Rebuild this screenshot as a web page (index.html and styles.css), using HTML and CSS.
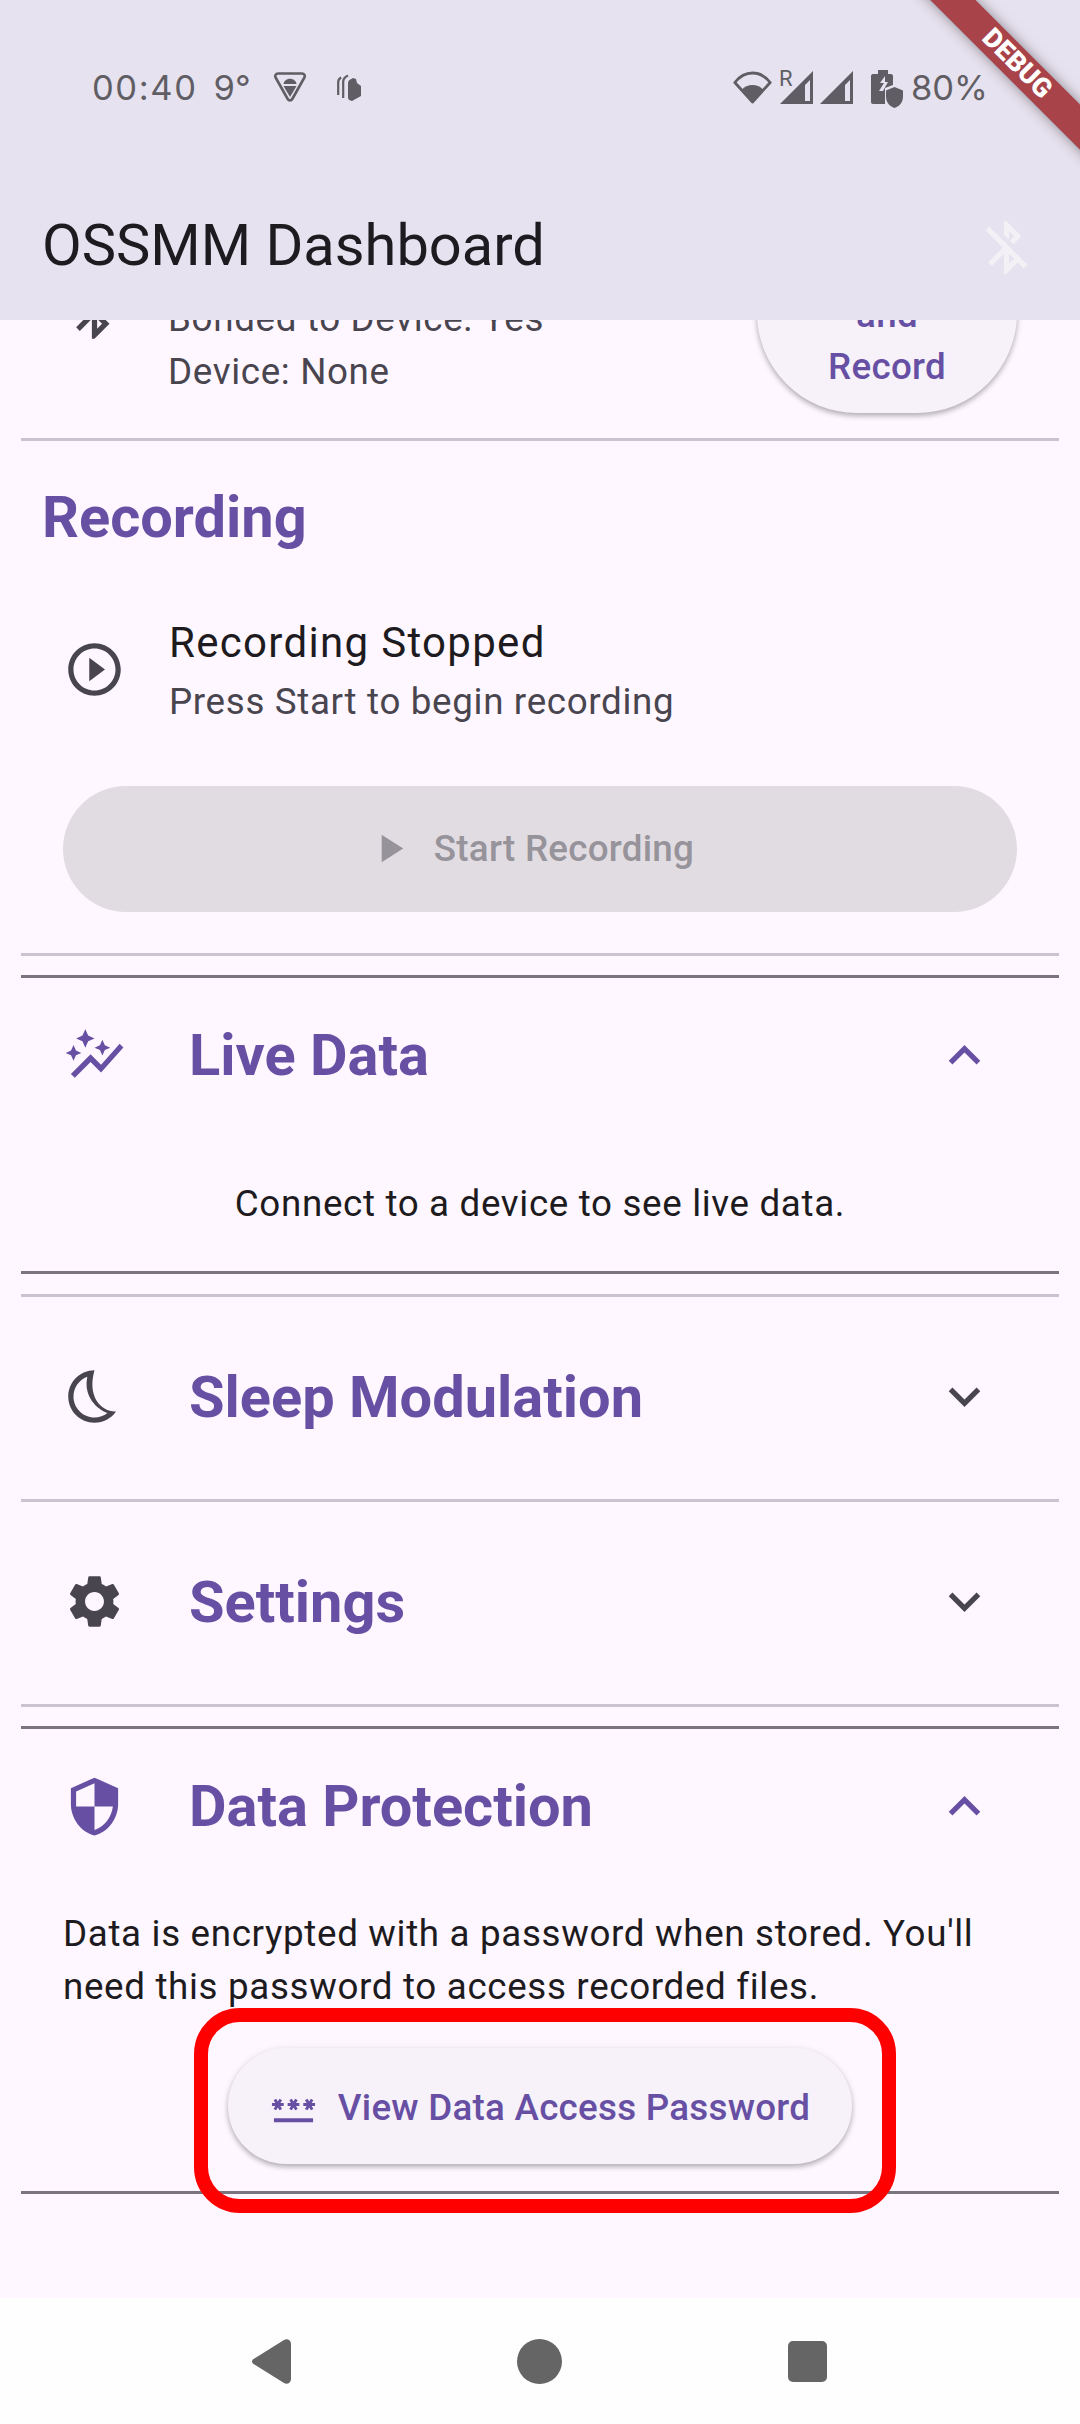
FILE: index.html
```html
<!DOCTYPE html>
<html>

<head>
    <meta name="viewport" content="width=device-width, initial-scale=1.0">
    <title>OSSMM Dashboard</title>
    <link rel="stylesheet" href="styles.css">
</head>

<body>
    <div class="phone">
        <header class="top">
            <div class="status-bar">
                <div class="status-left">
                    <span class="clock">00:40</span>
                    <span class="temp">9°</span>
                    <svg class="ic-vpn" viewBox="0 0 34 32">
                        <path d="M5 2.500h24c2.300 0 3.500 2.200 2.400 4L19.300 28c-1.100 1.900-3.500 1.900-4.600 0L2.600 6.500C1.500 4.700 2.700 2.500 5 2.500z" fill="none" stroke="currentColor" stroke-width="2.600" />
                        <path d="M10.500 13c.4-3.200 3.200-5.300 6.500-5.300s6.100 2.100 6.500 5.300z" fill="currentColor" />
                        <path d="M10.500 15h13L17 26z" fill="currentColor" />
                    </svg>
                    <svg class="ic-cards" viewBox="0 0 24 27">
                        <path d="M1.200 21V8c0-2 1-3.500 3-4.500" fill="none" stroke="currentColor" stroke-width="2.200" />
                        <path d="M6.200 24V8c0-3 1.500-5 4.800-6.500" fill="none" stroke="currentColor" stroke-width="2.200" />
                        <path d="M11 24V9c0-2 1.500-3.500 5-5l3 1 1 4 4 3v10l-9 5-3-1z" fill="currentColor" />
                    </svg>
                </div>
                <div class="status-right">
                    <svg class="ic-wifi" viewBox="0 0 39 33">
                        <path d="M1.800 11.500C6.500 5.500 12.500 2 19.500 2s13 3.500 17.700 9.500L19.500 31z" fill="none" stroke="currentColor" stroke-width="2.800" stroke-linejoin="round" />
                        <path d="M8.500 19c3-3.200 6.700-5 11-5s8 1.800 11 5l-11 13z" fill="currentColor" />
                    </svg>
                    <span class="roam">R</span>
                    <svg class="ic-signal" viewBox="0 0 33 33">
                        <path d="M0 33L33 0v33zM25 30h5V9l-5 5z" fill="currentColor" fill-rule="evenodd" />
                    </svg>
                    <svg class="ic-signal ic-signal-two" viewBox="0 0 33 33">
                        <path d="M0 33L33 0v33zM25 30h5V9l-5 5z" fill="currentColor" fill-rule="evenodd" />
                    </svg>
                    <svg class="ic-battery" viewBox="0 0 32 39">
                        <path d="M0 6c0-1 .7-2 2-2h5V0h10v4h3c1 0 2 1 2 2v9l-8 3v16H2c-1.300 0-2-1-2-2z" fill="currentColor" />
                        <path d="M8 21l5-8H9l5-7v6h3l-5 9z" fill="#e7e2ef" />
                        <path d="M23.500 17l8.500 3.500v6c0 5.500-3.500 10-8.500 11.500-5-1.500-8.500-6-8.500-11.500v-6z" fill="currentColor" />
                    </svg>
                    <span class="battery">80%</span>
                </div>
            </div>
            <div class="app-bar">
                <h1 class="app-title">OSSMM Dashboard</h1>
                <svg class="icon ic-bt-off" viewBox="0 0 24 24">
                    <path d="M13 5.830l1.880 1.880-1.600 1.600 1.410 1.410 3.020-3.020L12 2h-1v5.030l2 2v-3.200zM5.410 4L4 5.410 10.590 12 5 17.590 6.410 19 11 14.410V22h1l4.290-4.290 2.300 2.290L20 18.590 5.410 4zM13 18.170v-3.760l1.880 1.880L13 18.170z" />
                </svg>
            </div>
        </header>

        <main class="content">
            <section class="connection">
                <div class="connection-info">
                    <svg class="icon ic-dark ic-bt" viewBox="0 0 24 24">
                        <path d="M17.710 7.710L12 2h-1v7.590L6.410 5 5 6.410 10.590 12 5 17.590 6.410 19 11 14.410V22h1l5.710-5.710-4.300-4.290 4.300-4.290zM13 5.830l1.880 1.880L13 9.590V5.830zm1.880 10.460L13 18.170v-3.760l1.880 1.880z" />
                    </svg>
                    <div class="sub-text">
                        <div>Bonded to Device: Yes</div>
                        <div>Device: None</div>
                    </div>
                </div>
                <button class="btn-raised btn-connect">Connect and Record</button>
            </section>
            <div class="rule"></div>

            <section class="recording">
                <h2 class="heading recording-heading">Recording</h2>
                <div class="recording-row">
                    <svg class="icon ic-dark" viewBox="0 0 24 24">
                        <path d="M10 16.500l6-4.500-6-4.500v9zM12 2C6.480 2 2 6.480 2 12s4.480 10 10 10 10-4.480 10-10S17.520 2 12 2zm0 18c-4.410 0-8-3.590-8-8s3.590-8 8-8 8 3.590 8 8-3.590 8-8 8z" />
                    </svg>
                    <div>
                        <div class="row-title">Recording Stopped</div>
                        <div class="sub-text">Press Start to begin recording</div>
                    </div>
                </div>
                <button class="btn-start">
                    <svg class="btn-icon" viewBox="0 0 24 24">
                        <path d="M8 5v14l11-7z" />
                    </svg>
                    Start Recording
                </button>
            </section>
            <div class="rule"></div>

            <section class="tile tile-open live">
                <div class="tile-head">
                    <svg class="icon ic-primary" viewBox="0 0 24 24">
                        <path d="M14.060 9.940L12 9l2.060-.94L15 6l.94 2.060L18 9l-2.060.94L15 12l-.94-2.060zM4 14l.94-2.060L7 11l-2.060-.94L4 8l-.94 2.060L1 11l2.060.94L4 14zm4.500-5l1.090-2.410L12 5.500 9.590 4.410 8.500 2 7.410 4.410 5 5.500l2.410 1.090L8.500 9zm-4 11.500l6-6.010 4 4L23 8.930l-1.410-1.410-7.090 7.970-4-4L3 19l1.500 1.500z" />
                    </svg>
                    <h2 class="heading">Live Data</h2>
                    <svg class="icon ic-primary chevron" viewBox="0 0 24 24">
                        <path d="M12 8l-6 6 1.410 1.410L12 10.830l4.590 4.580L18 14z" />
                    </svg>
                </div>
                <p class="live-text">Connect to a device to see live data.</p>
            </section>

            <div class="rule rule-spaced"></div>

            <section class="tile">
                <div class="tile-head">
                    <svg class="icon ic-dark" viewBox="0 0 24 24">
                        <path d="M9.270 4.490c-1.630 7.540 3.750 12.410 7.660 13.800C15.540 19.380 13.810 20 12 20c-4.410 0-8-3.590-8-8 0-3.450 2.200-6.400 5.270-7.510M12 2C6.500 2 2 6.500 2 12s4.500 10 10 10c3.400 0 6.400-1.700 8.200-4.300C15 18 9 12.500 12 2z" />
                    </svg>
                    <h2 class="heading">Sleep Modulation</h2>
                    <svg class="icon ic-dark chevron" viewBox="0 0 24 24">
                        <path d="M16.590 8.590L12 13.170 7.410 8.590 6 10l6 6 6-6z" />
                    </svg>
                </div>
            </section>
            <div class="rule"></div>

            <section class="tile">
                <div class="tile-head">
                    <svg class="icon ic-dark" viewBox="0 0 24 24">
                        <path d="M19.140 12.940c.04-.3.060-.61.060-.94 0-.32-.02-.64-.07-.94l2.030-1.580c.18-.14.230-.41.120-.61l-1.920-3.320c-.12-.22-.37-.29-.59-.22l-2.390.96c-.5-.38-1.030-.7-1.620-.94l-.36-2.540c-.04-.24-.24-.41-.48-.41h-3.840c-.24 0-.43.170-.47.410l-.36 2.540c-.59.240-1.130.570-1.620.940l-2.390-.96c-.22-.08-.47 0-.59.220L2.740 8.870c-.12.210-.08.470.120.610l2.030 1.580c-.05.300-.09.630-.09.940s.020.640.070.940l-2.030 1.580c-.18.140-.23.410-.12.610l1.920 3.320c.12.220.37.290.59.220l2.390-.96c.5.380 1.030.7 1.620.94l.36 2.540c.05.240.24.410.48.410h3.840c.24 0 .44-.17.47-.41l.36-2.540c.59-.24 1.130-.56 1.620-.94l2.390.96c.22.080.47 0 .59-.22l1.920-3.320c.12-.22.070-.47-.12-.61l-2.010-1.580zM12 15.600c-1.980 0-3.600-1.620-3.600-3.600s1.620-3.600 3.600-3.600 3.600 1.620 3.600 3.600-1.620 3.600-3.600 3.600z" />
                    </svg>
                    <h2 class="heading">Settings</h2>
                    <svg class="icon ic-dark chevron" viewBox="0 0 24 24">
                        <path d="M16.590 8.590L12 13.170 7.410 8.590 6 10l6 6 6-6z" />
                    </svg>
                </div>
            </section>
            <div class="rule"></div>

            <section class="tile tile-open protection">
                <div class="tile-head">
                    <svg class="icon ic-primary" viewBox="0 0 24 24">
                        <path d="M12 1L3 5v6c0 5.550 3.840 10.740 9 12 5.160-1.260 9-6.450 9-12V5l-9-4zm0 10.990h7c-.53 4.120-3.280 7.790-7 8.940V12H5V6.300l7-3.110v8.800z" />
                    </svg>
                    <h2 class="heading">Data Protection</h2>
                    <svg class="icon ic-primary chevron" viewBox="0 0 24 24">
                        <path d="M12 8l-6 6 1.410 1.410L12 10.830l4.590 4.580L18 14z" />
                    </svg>
                </div>
                <p class="protection-text">Data is encrypted with a password when stored. You'll need this password to access recorded files.</p>
                <div class="protection-action">
                    <button class="btn-raised btn-password">
                        <svg class="btn-icon" viewBox="0 0 24 24">
                            <path d="M2 17h20v2H2v-2zm1.150-4.050L4 11.470l.85 1.480 1.300-.75-.85-1.480H7v-1.500H5.300l.85-1.470L4.850 7 4 8.470 3.150 7l-1.300.75.85 1.470H1v1.500h1.700l-.85 1.480 1.300.75zm6.700-.75l1.300.75.85-1.480.85 1.480 1.300-.75-.85-1.480H15v-1.500h-1.700l.85-1.470-1.300-.75L12 8.470 11.150 7l-1.300.75.85 1.470H9v1.500h1.700l-.85 1.480zM23 9.220h-1.700l.85-1.470-1.300-.75L20 8.470 19.150 7l-1.300.75.85 1.470H17v1.500h1.700l-.85 1.480 1.300.75.85-1.480.85 1.480 1.300-.75-.85-1.480H23v-1.500z" />
                        </svg>
                        <span>View Data Access Password</span>
                    </button>
                </div>
            </section>
        </main>

        <nav class="nav-bar">
            <svg class="nav-back" viewBox="0 0 39 45">
                <path d="M1.500 20L32 1c3-1.800 7 0 7 4v35c0 4-4 5.800-7 4L1.500 25c-2-1.300-2-3.700 0-5z" />
            </svg>
            <div class="nav-home"></div>
            <div class="nav-recent"></div>
        </nav>

        <div class="debug-banner">DEBUG</div>
        <div class="highlight"></div>
    </div>
</body>

</html>
```

FILE: styles.css
```css
* {
    box-sizing: border-box;
}

body {
    margin: 0;
    background-color: #fef7ff;
    color: #1d1b20;
    font-family: Roboto, "Noto Sans", sans-serif;
}

.phone {
    position: relative;
    display: flex;
    flex-direction: column;
    width: 1080px;
    height: 2424px;
    overflow: hidden;
}

/* header */
.top {
    height: 320px;
    background-color: #e7e2ef;
}

.status-bar {
    display: flex;
    justify-content: space-between;
    align-items: center;
    height: 174px;
    padding: 0 92px;
    color: #605e64;
    font-family: Inter, Roboto, sans-serif;
    font-size: 34.5px;
}

.status-left,
.status-right {
    display: flex;
    align-items: center;
}

.clock {
    letter-spacing: 1.6px;
}

.temp {
    margin-left: 16px;
}

.ic-vpn {
    width: 34px;
    height: 32px;
    margin-left: 22px;
}

.ic-cards {
    width: 24px;
    height: 27px;
    margin-left: 30px;
}

.ic-wifi {
    width: 39px;
    height: 33px;
}

.roam {
    align-self: flex-start;
    width: 0;
    margin: 0 0 0 7px;
    font-family: Roboto, sans-serif;
    font-size: 22px;
    line-height: 26px;
}

.ic-signal {
    width: 33px;
    height: 33px;
    margin-left: 1px;
}

.ic-signal-two {
    margin-left: 7px;
}

.ic-battery {
    width: 32px;
    height: 39px;
    margin: 4px 0 0 18px;
}

.battery {
    margin-left: 8px;
}

.app-bar {
    display: flex;
    justify-content: space-between;
    align-items: center;
    height: 146px;
    padding: 0 42px;
}

.app-title {
    margin: 0 0 5px 0;
    font-size: 57.75px;
    font-weight: 400;
    line-height: 70px;
}

.icon {
    flex: none;
    width: 63px;
    height: 63px;
    fill: #49454f;
}

.ic-dark {
    fill: #49454f;
}

.ic-primary {
    fill: #6750a4;
}

.ic-bt-off {
    fill: #f3f0f6;
}

/* scrolled content */
.content {
    flex: 1;
    overflow: hidden;
}

.rule {
    height: 3px;
    background-color: #cac4d0;
}

.rule,
.tile-open {
    margin-left: 21px;
    margin-right: 21px;
}

.sub-text {
    color: #49454f;
    font-size: 36.75px;
    letter-spacing: 0.66px;
    line-height: 52.5px;
}

.heading {
    margin: 0;
    color: #6750a4;
    font-size: 57.75px;
    font-weight: 700;
    line-height: 66px;
}

.btn-raised {
    border: none;
    background-color: #f7f2fa;
    color: #6750a4;
    font-family: Roboto, "Noto Sans", sans-serif;
    font-size: 36.75px;
    font-weight: 500;
    letter-spacing: 0.26px;
    line-height: 52px;
    box-shadow: 0 3px 5px rgba(0, 0, 0, 0.25), 0 1px 8px rgba(0, 0, 0, 0.08);
}

.btn-icon {
    flex: none;
    width: 47px;
    height: 47px;
    fill: currentColor;
}

.connection {
    display: flex;
    justify-content: space-between;
    align-items: flex-end;
    height: 118px;
    padding: 0 63px;
    overflow: hidden;
}

.connection-info {
    display: flex;
    align-items: flex-start;
    gap: 42px;
    margin-bottom: 40px;
}

.ic-bt {
    margin-top: -12px;
}

.btn-connect {
    flex: none;
    width: 260px;
    margin-bottom: 25px;
    padding: 24px 63px 20px;
    border-radius: 100px;
}

.recording {
    height: 512px;
}

.recording-heading {
    padding: 43px 0 0 42px;
}

.recording-row {
    display: flex;
    align-items: center;
    gap: 43px;
    margin-top: 61px;
    padding: 0 63px;
}

.row-title {
    margin-bottom: 2px;
    font-size: 42px;
    letter-spacing: 1.31px;
    line-height: 63px;
}

.btn-start {
    display: flex;
    justify-content: center;
    align-items: center;
    gap: 21px;
    width: 954px;
    height: 126px;
    margin: 57px 0 0 63px;
    padding: 0 20px 0 0;
    border: none;
    border-radius: 63px;
    background-color: #e1dce1;
    color: #97939b;
    font-family: Roboto, "Noto Sans", sans-serif;
    font-size: 36.75px;
    font-weight: 500;
    letter-spacing: 0.26px;
}

.tile {
    display: flex;
    align-items: center;
    height: 202px;
    padding-bottom: 3px;
}

.tile-open {
    display: block;
    height: auto;
    padding-bottom: 0;
    border-top: 3px solid #79747e;
    border-bottom: 3px solid #79747e;
}

.live {
    height: 299px;
    margin-top: 19px;
}

.protection {
    height: 468px;
    margin-top: 19px;
}

.rule-spaced {
    margin-top: 20px;
}

.tile-head {
    display: flex;
    align-items: center;
    width: 100%;
    height: 154px;
    gap: 63px;
}

.tile > .tile-head {
    padding-left: 63px;
    padding-right: 84px;
}

.tile-open > .tile-head {
    padding-left: 42px;
    padding-right: 63px;
}

.chevron {
    margin-left: auto;
}

.live-text {
    margin: 46px 0 0 0;
    font-size: 36.75px;
    letter-spacing: 0.66px;
    line-height: 52px;
    text-align: center;
}

.protection-text {
    margin: 25px 0 0 0;
    padding: 0 42px;
    font-size: 36.75px;
    letter-spacing: 0.66px;
    line-height: 52.5px;
}

.protection-action {
    display: flex;
    justify-content: center;
    margin-top: 35px;
}

.btn-password {
    display: flex;
    align-items: center;
    gap: 21px;
    height: 116px;
    padding: 4px 42px 0;
    border-radius: 58px;
}

/* android nav */
.nav-bar {
    display: flex;
    justify-content: center;
    align-items: center;
    gap: 226px;
    height: 126px;
    padding-right: 2px;
    background-color: #fffeff;
}

.nav-back {
    width: 39px;
    height: 45px;
    fill: #656565;
}

.nav-home {
    width: 45px;
    height: 45px;
    border-radius: 50%;
    background-color: #656565;
}

.nav-recent {
    width: 39px;
    height: 41px;
    border-radius: 5px;
    background-color: #656565;
}

/* overlays */
.debug-banner {
    position: absolute;
    top: 48px;
    left: 856.5px;
    width: 320px;
    height: 31.5px;
    background-color: #a8434a;
    box-shadow: 0 0 14px rgba(0, 0, 0, 0.4);
    color: #fff;
    font-size: 26.8px;
    font-weight: 900;
    line-height: 31.5px;
    text-align: center;
    transform: rotate(45deg);
}

.highlight {
    position: absolute;
    top: 2008px;
    left: 194px;
    width: 702px;
    height: 205px;
    border: 14px solid #ff0000;
    border-radius: 46px;
}
```
